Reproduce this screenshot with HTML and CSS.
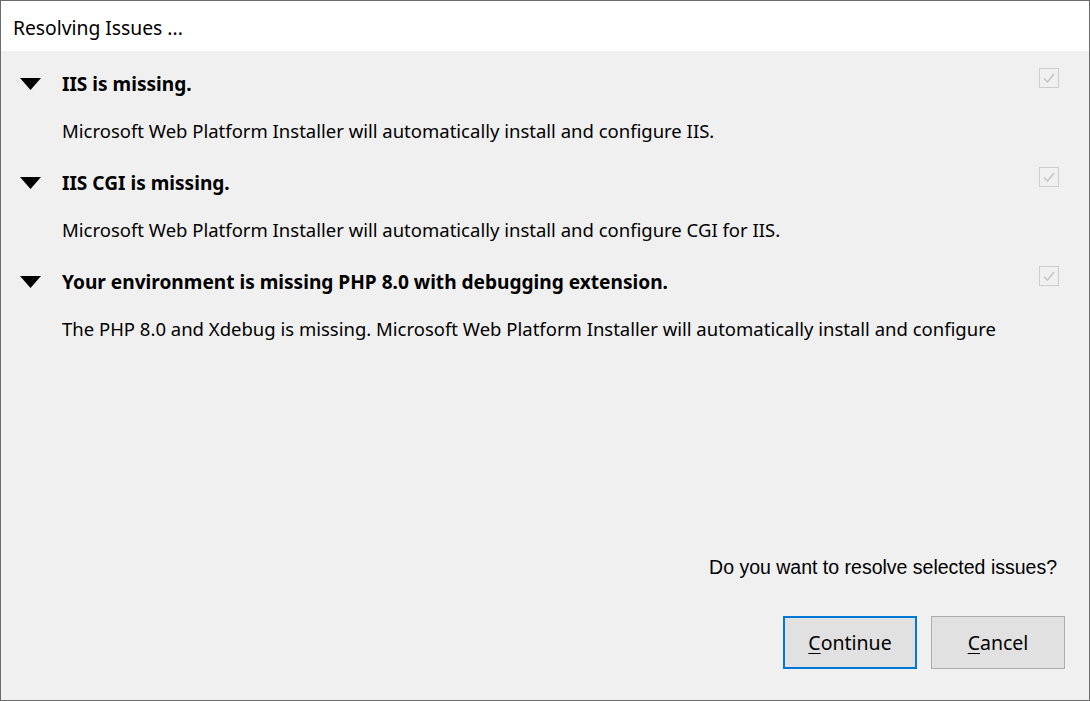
FILE: index.html
```html
<!DOCTYPE html>
<html>
<head>
<meta charset="utf-8">
<link rel="stylesheet" href="styles.css">
</head>
<body>
<div class="window">
  <div class="titlebar">Resolving Issues ...</div>
  <div class="content">
    <div class="issue">
      <div class="head">
        <svg class="tri" width="21" height="12" viewBox="0 0 21 12"><polygon points="0,0 21,0 10.5,12" fill="#000"/></svg>
        <span class="title">IIS is missing.</span>
        <span class="check"><svg width="18" height="18" viewBox="0 0 18 18"><polyline points="4,9.5 7.5,13 14,5" fill="none" stroke="#c6c6c6" stroke-width="1.6"/></svg></span>
      </div>
      <div class="desc">Microsoft Web Platform Installer will automatically install and configure IIS.</div>
    </div>
    <div class="issue">
      <div class="head">
        <svg class="tri" width="21" height="12" viewBox="0 0 21 12"><polygon points="0,0 21,0 10.5,12" fill="#000"/></svg>
        <span class="title">IIS CGI is missing.</span>
        <span class="check"><svg width="18" height="18" viewBox="0 0 18 18"><polyline points="4,9.5 7.5,13 14,5" fill="none" stroke="#c6c6c6" stroke-width="1.6"/></svg></span>
      </div>
      <div class="desc">Microsoft Web Platform Installer will automatically install and configure CGI for IIS.</div>
    </div>
    <div class="issue">
      <div class="head">
        <svg class="tri" width="21" height="12" viewBox="0 0 21 12"><polygon points="0,0 21,0 10.5,12" fill="#000"/></svg>
        <span class="title">Your environment is missing PHP 8.0 with debugging extension.</span>
        <span class="check"><svg width="18" height="18" viewBox="0 0 18 18"><polyline points="4,9.5 7.5,13 14,5" fill="none" stroke="#c6c6c6" stroke-width="1.6"/></svg></span>
      </div>
      <div class="desc">The PHP 8.0 and Xdebug is missing. Microsoft Web Platform Installer will automatically install and configure</div>
    </div>
  </div>
  <div class="footer">
    <div class="question">Do you want to resolve selected issues?</div>
    <div class="buttons">
      <button class="btn primary"><u>C</u>ontinue</button>
      <button class="btn"><u>C</u>ancel</button>
    </div>
  </div>
</div>
</body>
</html>
```

FILE: styles.css
```css
html, body {
  margin: 0;
  padding: 0;
}
body {
  width: 1090px;
  height: 701px;
  overflow: hidden;
  font-family: "Noto Sans", "Open Sans", sans-serif;
  color: #000;
}
.window {
  box-sizing: border-box;
  width: 1090px;
  height: 701px;
  border: 1px solid #6b6b6b;
  background: #f0f0f0;
  display: flex;
  flex-direction: column;
}
.titlebar {
  height: 50px;
  background: #fff;
  font-size: 19.3px;
  line-height: 53px;
  padding-left: 12px;
  flex: none;
}
.content {
  padding: 16px 30px 0 19px;
  display: flex;
  flex-direction: column;
  gap: 20px;
}
.issue {
  display: flex;
  flex-direction: column;
}
.head {
  height: 34px;
  display: flex;
  align-items: center;
}
.tri {
  display: block;
  flex: none;
  margin-right: 21px;
}
.title {
  font-weight: bold;
  font-size: 19.1px;
  flex: 1;
}
.check {
  align-self: flex-start;
  margin-top: 1px;
  box-sizing: border-box;
  width: 20px;
  height: 20px;
  border: 1px solid #cdcdcd;
  display: flex;
  align-items: center;
  justify-content: center;
}
.check svg {
  display: block;
}
.desc {
  margin-top: 15px;
  line-height: 30px;
  font-size: 18.5px;
  padding-left: 42px;
}
.footer {
  margin-top: auto;
  padding: 0 24px 31px 0;
  display: flex;
  flex-direction: column;
  align-items: flex-end;
}
.question {
  font-family: "Liberation Sans", Arial, sans-serif;
  font-size: 19.5px;
  line-height: 24px;
  margin-right: 8px;
}
.buttons {
  margin-top: 37px;
  display: flex;
  gap: 14px;
}
.btn {
  box-sizing: border-box;
  width: 134px;
  height: 53px;
  background: #e1e1e1;
  border: 1px solid #adadad;
  font-family: "Noto Sans", "Open Sans", sans-serif;
  font-size: 19.5px;
  color: #000;
  padding: 0;
  margin: 0;
}
.btn.primary {
  border: 2px solid #0078d7;
}
.btn u {
  text-underline-offset: 3px;
}
```
